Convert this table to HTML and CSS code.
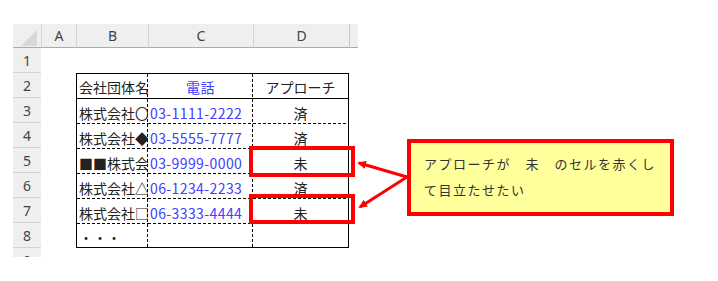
FILE: index.html
```html
<!DOCTYPE html>
<html lang="ja">
<head>
<meta charset="utf-8">
<link rel="stylesheet" href="styles.css">
</head>
<body>
<div class="page">
  <div class="sheet">
    <div class="corner"><svg width="28" height="24" viewBox="0 0 28 24"><polygon points="8,22 24,22 24,6" fill="#d8d8d8"/></svg></div>
    <div class="colhead">A</div>
    <div class="colhead">B</div>
    <div class="colhead">C</div>
    <div class="colhead">D</div>
    <div class="colhead last"></div>

    <div class="rowheads">
      <div class="rowhead">1</div>
      <div class="rowhead">2</div>
      <div class="rowhead">3</div>
      <div class="rowhead">4</div>
      <div class="rowhead">5</div>
      <div class="rowhead">6</div>
      <div class="rowhead">7</div>
      <div class="rowhead">8</div>
      <div class="rowhead">9</div>
    </div>

    <div class="table">
      <div class="cell name head-row">会社団体名</div>
      <div class="cell tel center head-row">電話</div>
      <div class="cell center last-col head-row">アプローチ</div>

      <div class="cell name">株式会社〇〇</div>
      <div class="cell tel">03-1111-2222</div>
      <div class="cell center last-col">済</div>

      <div class="cell name">株式会社◆◆</div>
      <div class="cell tel">03-5555-7777</div>
      <div class="cell center last-col">済</div>

      <div class="cell name">■■株式会社</div>
      <div class="cell tel">03-9999-0000</div>
      <div class="cell center last-col">未</div>

      <div class="cell name">株式会社△△</div>
      <div class="cell tel">06-1234-2233</div>
      <div class="cell center last-col">済</div>

      <div class="cell name">株式会社□□</div>
      <div class="cell tel">06-3333-4444</div>
      <div class="cell center last-col">未</div>

      <div class="cell name last-row">・・・</div>
      <div class="cell tel last-row"></div>
      <div class="cell center last-col last-row"></div>
    </div>
  </div>

  <div class="mark mark-1"></div>
  <div class="mark mark-2"></div>

  <svg class="arrows" width="718" height="281" viewBox="0 0 718 281">
    <defs>
      <marker id="head" markerWidth="10" markerHeight="10" refX="7" refY="5" orient="auto" markerUnits="userSpaceOnUse">
        <path d="M0,1 L9,5 L0,9 Z" fill="#ff0000"/>
      </marker>
    </defs>
    <line x1="407" y1="177" x2="359" y2="163" stroke="#ff0000" stroke-width="3" marker-end="url(#head)"/>
    <line x1="407" y1="177" x2="360" y2="207" stroke="#ff0000" stroke-width="3" marker-end="url(#head)"/>
  </svg>

  <div class="callout">アプローチが　未　のセルを赤くし<br>て目立たせたい</div>
</div>
</body>
</html>
```

FILE: styles.css
```css
html, body {
  margin: 0;
  padding: 0;
  background: #ffffff;
}

.page {
  position: relative;
  width: 718px;
  height: 281px;
  overflow: hidden;
  font-family: "Noto Sans CJK JP", "Noto Sans", sans-serif;
}

.sheet {
  margin: 24px 0 0 13px;
  width: 345px;
  height: 233px;
  overflow: hidden;
  display: grid;
  grid-template-columns: 28px 35px 72px 105px 96px 9px;
  grid-template-rows: 24px 25px 175px 9px;
  background: #ffffff;
}

.corner {
  background: #efefef;
  border-bottom: 1px solid #ababab;
  box-sizing: border-box;
  display: flex;
}

.colhead {
  background: #efefef;
  border-bottom: 1px solid #ababab;
  border-left: 1px solid #d4d4d4;
  box-sizing: border-box;
  display: flex;
  align-items: center;
  justify-content: center;
  font-family: "Noto Sans", sans-serif;
  font-size: 14px;
  color: #444444;
}

.colhead.last {
  border-left: 1px solid #c8c8c8;
}

.rowheads {
  grid-column: 1;
  grid-row: 2 / 5;
  display: grid;
  grid-template-rows: repeat(9, 25px);
  background: #efefef;
}

.rowhead {
  border-bottom: 1px solid #d4d4d4;
  box-sizing: border-box;
  display: flex;
  align-items: center;
  justify-content: center;
  font-family: "Noto Sans", sans-serif;
  font-size: 14px;
  color: #444444;
  padding-top: 1px;
}

.table {
  grid-column: 3 / 6;
  grid-row: 3;
  border: 1px solid #000000;
  box-sizing: border-box;
  display: grid;
  grid-template-columns: 71px 105px 1fr;
  grid-template-rows: repeat(6, 25px) 1fr;
}

.cell {
  box-sizing: border-box;
  display: flex;
  align-items: center;
  padding: 2px 0 0 2px;
  overflow: hidden;
  white-space: nowrap;
  font-size: 14px;
  color: #222222;
  background:
    repeating-linear-gradient(to bottom, #000 0 3px, transparent 3px 5px) right top / 1px 100% no-repeat,
    repeating-linear-gradient(to right, #000 0 3px, transparent 3px 5px) left bottom / 100% 1px no-repeat;
}

.cell.last-col {
  background:
    repeating-linear-gradient(to right, #000 0 3px, transparent 3px 5px) left bottom / 100% 1px no-repeat;
}

.cell.head-row {
  border-bottom: 1px solid #000000;
  background:
    repeating-linear-gradient(to bottom, #000 0 3px, transparent 3px 5px) right top / 1px 100% no-repeat;
}

.cell.head-row.last-col {
  background: none;
}

.cell.last-row {
  background:
    repeating-linear-gradient(to bottom, #000 0 3px, transparent 3px 5px) right top / 1px 100% no-repeat;
}

.cell.last-row.last-col {
  background: none;
}

.cell.tel {
  color: #4040ff;
  letter-spacing: 0.4px;
}

.cell.center {
  justify-content: center;
  padding-left: 0;
}

.mark {
  position: absolute;
  border: 4px solid #ff0000;
  box-sizing: border-box;
  left: 249px;
  width: 106px;
}

.mark-1 {
  top: 146px;
  height: 31px;
}

.mark-2 {
  top: 194px;
  height: 30px;
}

.arrows {
  position: absolute;
  left: 0;
  top: 0;
}

.callout {
  position: absolute;
  left: 407px;
  top: 139px;
  width: 267px;
  height: 77px;
  box-sizing: border-box;
  border: 4px solid #ff0000;
  background: #ffff9c;
  padding: 8px 0 0 13px;
  font-size: 13px;
  line-height: 26px;
  letter-spacing: 1.5px;
  color: #333333;
}
```
